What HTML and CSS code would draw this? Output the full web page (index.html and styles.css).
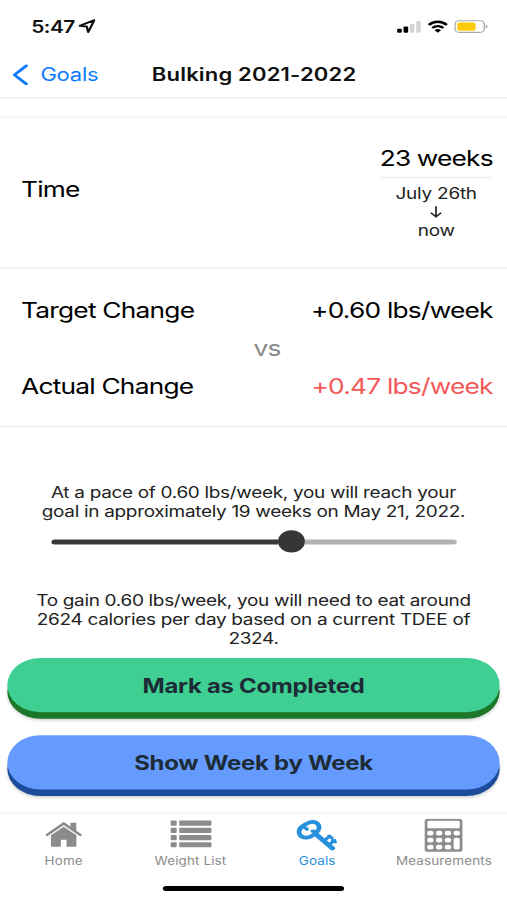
FILE: index.html
```html
<!DOCTYPE html>
<html lang="en">
<head>
  <meta charset="UTF-8" />
  <meta name="viewport" content="width=device-width, initial-scale=1.0" />
  <title>Bulking 2021-2022</title>
  <link rel="stylesheet" href="styles.css">
</head>
<body>

<div class="screen">
  <div class="status-bar">
    <span class="clock">5:47</span>
    <svg class="location" width="14" height="14" viewBox="0 0 14 14">
      <path d="M13 1 L1 6.8 L6.8 7.4 L8 13 Z" fill="none" stroke="#111" stroke-width="1.9" stroke-linejoin="round"/>
    </svg>
    <div class="status-icons">
      <svg width="20" height="13" viewBox="0 0 20 13">
        <rect x="0.3" y="8.6" width="3.8" height="4" rx="1" fill="#000"/>
        <rect x="5.5" y="6.3" width="3.8" height="6.3" rx="1" fill="#000"/>
        <rect x="10.7" y="3.6" width="3.6" height="9" rx="1" fill="#d4d4d4"/>
        <rect x="15.9" y="0.8" width="3.6" height="11.8" rx="1" fill="#d4d4d4"/>
      </svg>
      <svg width="17" height="13" viewBox="0 0 17 13">
        <path d="M1.2 4.9 C5.2 0.6 11.8 0.6 15.8 4.9" fill="none" stroke="#000" stroke-width="2.5"/>
        <path d="M4 7.9 C6.5 5.3 10.5 5.3 13 7.9" fill="none" stroke="#000" stroke-width="2.3"/>
        <path d="M5.9 10 C7.4 8.6 9.6 8.6 11.1 10 L8.5 12.7 Z" fill="#000"/>
      </svg>
      <svg width="28" height="13" viewBox="0 0 28 13">
        <rect x="0.6" y="0.6" width="23.8" height="11.6" rx="3.4" fill="none" stroke="#a8a8a8" stroke-width="1.1"/>
        <rect x="2.4" y="2.3" width="15" height="8.2" rx="1.8" fill="#fecb0a"/>
        <path d="M25.6 4.3 C27.7 5 27.7 7.8 25.6 8.5 Z" fill="#a8a8a8"/>
      </svg>
    </div>
  </div>

  <div class="nav">
    <a class="back">
      <svg width="13" height="21" viewBox="0 0 13 21">
        <path d="M11.5 1.4 L1.8 10.5 L11.5 19.6" fill="none" stroke="#0a7aff" stroke-width="2.6" stroke-linecap="round" stroke-linejoin="round"/>
      </svg>
      <span>Goals</span>
    </a>
    <h1>Bulking 2021-2022</h1>
  </div>

  <div class="spacer"></div>

  <div class="row time-row">
    <span class="time">Time</span>
    <div class="duration">
      <div class="weeks">23 weeks</div>
      <div class="date">July 26th</div>
      <svg class="arrow" width="10" height="12" viewBox="0 0 10 12">
        <path d="M5 0.4 V10.8 M0.8 6.9 L5 10.9 L9.2 6.9" fill="none" stroke="#222" stroke-width="1.4"/>
      </svg>
      <div class="now">now</div>
    </div>
  </div>

  <div class="changes">
    <div class="row">
      <span class="target">Target Change</span>
      <span class="rate">+0.60 lbs/week</span>
    </div>
    <div class="vs">vs</div>
    <div class="row">
      <span class="target">Actual Change</span>
      <span class="rate behind">+0.47 lbs/week</span>
    </div>
  </div>

  <div class="pace">
    <p>At a pace of 0.60 lbs/week, you will reach your<br>goal in approximately 19 weeks on May 21, 2022.</p>
    <div class="slider">
      <div class="fill"></div>
      <div class="knob"></div>
      <div class="rest"></div>
    </div>
    <p class="calories">To gain 0.60 lbs/week, you will need to eat around<br>2624 calories per day based on a current TDEE of<br>2324.</p>
  </div>

  <div class="buttons">
    <button type="button" class="btn btn-green">Mark as Completed</button>
    <button type="button" class="btn btn-blue">Show Week by Week</button>
  </div>

  <div class="tabs">
    <a class="tab">
      <svg width="30" height="34" viewBox="0 0 30 34">
        <path d="M1.5 16.2 L15 4.8 L28.5 16.2" fill="none" stroke="#8c8c8c" stroke-width="2.4" stroke-linecap="round" stroke-linejoin="round"/>
        <path d="M20.5 4.2 H25.3 V13 L20.5 9 Z" fill="#8c8c8c"/>
        <path d="M4.6 16.6 L15 8 L25.4 16.6 V27 Q25.4 28 24.4 28 H17.3 V21 H12.7 V28 H5.6 Q4.6 28 4.6 27 Z" fill="#8c8c8c"/>
      </svg>
      <span>Home</span>
    </a>
    <a class="tab">
      <svg width="34" height="34" viewBox="0 0 34 34" fill="#8c8c8c">
        <rect x="0.3" y="1.8" width="5" height="5.2" rx="1"/>
        <rect x="7.3" y="1.8" width="26.4" height="5.2" rx="1"/>
        <rect x="0.3" y="9" width="5" height="5.2" rx="1"/>
        <rect x="7.3" y="9" width="26.4" height="5.2" rx="1"/>
        <rect x="0.3" y="16.2" width="5" height="5.2" rx="1"/>
        <rect x="7.3" y="16.2" width="26.4" height="5.2" rx="1"/>
        <rect x="0.3" y="23.4" width="5" height="5.2" rx="1"/>
        <rect x="7.3" y="23.4" width="26.4" height="5.2" rx="1"/>
      </svg>
      <span>Weight List</span>
    </a>
    <a class="tab active">
      <svg width="34" height="34" viewBox="0 0 34 34" fill="none" stroke="#2790dc">
        <path d="M9.8 4.2 C14.6 1.6 19.4 4.8 18.4 10 C17.8 13 16.4 14 14 16 C10.4 20 4.8 19.6 2.8 16 C1.2 12.6 2.4 10 4.8 7.8 C6.4 6.2 7.8 5.2 9.8 4.2 Z" stroke-width="3.8"/>
        <path d="M6.6 8.4 L8.6 10.4 M15.6 13 L13.2 12.4" stroke-width="3.2" stroke-linecap="round"/>
        <path d="M16 15.6 L29.4 29.4" stroke-width="4.4" stroke-linecap="round"/>
        <path d="M22.6 22 L27.4 17.2 M26.8 26 L31.2 21.6 M26.4 17.6 L29 19 M29.6 21.6 L31.8 23.2" stroke-width="2.8" stroke-linecap="round"/>
      </svg>
      <span>Goals</span>
    </a>
    <a class="tab">
      <svg width="34" height="34" viewBox="0 0 34 34">
        <rect x="0.8" y="0" width="30.8" height="33" rx="2.6" fill="#8c8c8c"/>
        <g fill="#fff">
          <rect x="3" y="2.2" width="26.4" height="7.4" rx="1"/>
          <rect x="2.8" y="12" width="5.2" height="4.8" rx="2.2"/>
          <rect x="10" y="12" width="5.2" height="4.8" rx="2.2"/>
          <rect x="17.2" y="12" width="5.2" height="4.8" rx="2.2"/>
          <rect x="24.4" y="12" width="5.2" height="4.8" rx="2.2"/>
          <rect x="2.8" y="19" width="5.2" height="4.8" rx="2.2"/>
          <rect x="10" y="19" width="5.2" height="4.8" rx="2.2"/>
          <rect x="17.2" y="19" width="5.2" height="4.8" rx="2.2"/>
          <rect x="24.4" y="19" width="5" height="11.8" rx="1.8"/>
          <rect x="2.8" y="26" width="5.2" height="4.8" rx="2.2"/>
          <rect x="10" y="26" width="5.2" height="4.8" rx="2.2"/>
          <rect x="17.2" y="26" width="5.2" height="4.8" rx="2.2"/>
        </g>
      </svg>
      <span>Measurements</span>
    </a>
  </div>

  <div class="home-indicator"></div>
</div>

</body>
</html>
```
FILE: styles.css
```css
* { box-sizing: border-box; }
body {
  margin: 0;
  font-family: Inter, "Liberation Sans", sans-serif;
  background: #fff;
  color: #111;
  overflow: hidden;
}
.screen {
  width: 414px;
  height: 896px;
  display: flex;
  flex-direction: column;
  transform: scale(1.22464, 1.00446);
  transform-origin: 0 0;
}
.status-bar {
  height: 52px;
  padding: 0 15px 0 25.5px;
  display: flex;
  align-items: center;
}
.clock {
  font-size: 17px;
  font-weight: 600;
  letter-spacing: -0.4px;
  padding-top: 1px;
}
.location {
  margin-left: 3px;
}
.status-icons {
  margin-left: auto;
  display: flex;
  gap: 5px;
}
.nav {
  height: 46px;
  display: grid;
  grid-template-columns: 124px 1fr;
  align-items: center;
  padding-bottom: 1px;
  border-bottom: 1.5px solid #e6e6e8;
}
.back {
  display: flex;
  align-items: center;
  gap: 10px;
  padding-left: 10px;
  color: #0a7aff;
  font-size: 18px;
  letter-spacing: -0.2px;
}
h1 {
  margin: 0;
  font-size: 18px;
  font-weight: 600;
  letter-spacing: 0.13px;
}
.spacer {
  height: 18.5px;
  border-bottom: 1px solid #f0f0f0;
}
.row {
  display: flex;
  justify-content: space-between;
  align-items: center;
  padding: 0 11.7px 0 17.2px;
  font-size: 21.5px;
  letter-spacing: -0.65px;
  line-height: 26px;
  color: #000;
}
.time-row {
  height: 151.5px;
  border-bottom: 2px solid #f4f4f4;
}
.time {
  margin-bottom: 6px;
}
.duration {
  text-align: center;
  font-size: 15.5px;
  letter-spacing: -0.2px;
  line-height: 19px;
}
.weeks {
  font-size: 21.5px;
  letter-spacing: -0.7px;
  line-height: 26px;
  padding-bottom: 6px;
  margin-bottom: 6px;
  border-bottom: 1px solid #ebebeb;
}
.date, .now {
  color: #222;
}
.arrow {
  display: block;
  margin: 3px auto;
}
.changes {
  height: 157px;
  padding-top: 28px;
  border-bottom: 1px solid #e8e8e8;
}
.vs {
  padding-left: 207px;
  font-size: 21.5px;
  letter-spacing: -0.65px;
  line-height: 26px;
  margin: 11px 0 11.5px;
  color: #888;
}
.behind {
  color: #f25a5a;
}
.pace {
  height: 230px;
  padding-top: 57px;
  text-align: center;
}
.pace p {
  margin: 0;
  font-size: 15.5px;
  letter-spacing: -0.26px;
  line-height: 18.6px;
  color: #222;
}
.slider {
  display: flex;
  align-items: center;
  margin: 9.3px 41px 0 42px;
}
.fill, .rest {
  height: 4.5px;
  background: #3a3a3c;
  border-radius: 3px 0 0 3px;
}
.fill {
  width: 185px;
}
.rest {
  flex: 1;
  background: #b2b2b2;
  border-radius: 0 3px 3px 0;
}
.knob {
  width: 22px;
  height: 22px;
  border-radius: 50%;
  background: #363638;
}
.pace .calories {
  margin-top: 39px;
}
.buttons {
  height: 154px;
  padding: 0 6px;
  display: flex;
  flex-direction: column;
  gap: 23px;
}
.btn {
  height: 54px;
  flex: none;
  border: none;
  border-radius: 30px;
  padding: 1px 6px 0;
  font-family: inherit;
  font-size: 19.5px;
  font-weight: 700;
  letter-spacing: -0.2px;
  color: #1d2b36;
}
.btn-green {
  background: #3fcf92;
  box-shadow: 0 6.5px 0 #1b7727, 0 8px 3px rgba(0, 0, 0, 0.2);
}
.btn-blue {
  background: #659bff;
  box-shadow: 0 6.5px 0 #1d4c9c, 0 8px 3px rgba(0, 0, 0, 0.2);
}
.tabs {
  height: 72.5px;
  display: grid;
  grid-template-columns: repeat(4, 1fr);
  padding-top: 5px;
  border-top: 1px solid #ececec;
}
.tab {
  display: flex;
  flex-direction: column;
  align-items: center;
  gap: 1px;
  padding-left: 0.5px;
  font-size: 11px;
  letter-spacing: 0.1px;
  line-height: 14px;
  color: #8c8c8c;
}
.active {
  color: #2790dc;
}
.home-indicator {
  width: 148px;
  height: 5.5px;
  margin: 0 auto;
  border-radius: 3px;
  background: #000;
}
```
